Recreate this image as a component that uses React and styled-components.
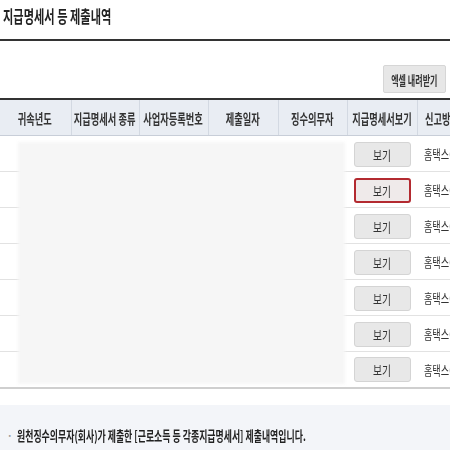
import React from "react"
import styled, {createGlobalStyle} from "styled-components"

const GlobalStyle = createGlobalStyle`
  body {
    margin: 0;
    background: #fff;
    overflow: hidden;
    font-family: "Noto Sans CJK KR", "Noto Sans", sans-serif;
    color: #333;
  }
`

const columns = [
    {label: "귀속년도", width: 71},
    {label: "지급명세서 종류", width: 68},
    {label: "사업자등록번호", width: 69},
    {label: "제출일자", width: 70},
    {label: "징수의무자", width: 69},
    {label: "지급명세서보기", width: 70},
    {label: "신고방법", width: 90, left: true},
]

const rows = [0, 1, 2, 3, 4, 5, 6]

const App = () => {
    return (
        <Page>
            <GlobalStyle/>
            <Title>
                <Narrow $scale={0.66} $origin="left">지급명세서 등 제출내역</Narrow>
            </Title>
            <Toolbar>
                <ExcelButton>
                    <Fit>
                        <Narrow $scale={0.62}>엑셀 내려받기</Narrow>
                    </Fit>
                </ExcelButton>
            </Toolbar>
            <TableWrap>
                <Table>
                    <colgroup>
                        {columns.map((c) => (
                            <col key={c.label} style={{width: c.width}}/>
                        ))}
                    </colgroup>
                    <thead>
                    <tr>
                        {columns.map((c) => (
                            <HeadCell key={c.label} $left={c.left}>
                                <Fit $left={c.left}>
                                    <Narrow $scale={0.66} $origin={c.left ? "left" : "center"}>
                                        {c.label}
                                    </Narrow>
                                </Fit>
                            </HeadCell>
                        ))}
                    </tr>
                    </thead>
                    <tbody>
                    {rows.map((r) => (
                        <Row key={r}>
                            <Cell/>
                            <Cell/>
                            <Cell/>
                            <Cell/>
                            <Cell/>
                            <Cell>
                                <ViewButton $active={r === 1}>
                                    <Narrow $scale={0.75}>보기</Narrow>
                                </ViewButton>
                            </Cell>
                            <Cell $left>
                                <Fit $left>
                                    <Narrow $scale={0.7} $origin="left">홈택스(전자신고)</Narrow>
                                </Fit>
                            </Cell>
                        </Row>
                    ))}
                    </tbody>
                </Table>
                <Blur/>
            </TableWrap>
            <Notice>
                <Dot>·</Dot>
                <Narrow $scale={0.66} $origin="left">
                    원천징수의무자(회사)가 제출한 [근로소득 등 각종지급명세서] 제출내역입니다.
                </Narrow>
            </Notice>
        </Page>
    )
}

const Page = styled.div`
  width: 450px;
  height: 450px;
  overflow: hidden;
`

const Narrow = styled.span`
  display: inline-block;
  flex-shrink: 0;
  white-space: nowrap;
  transform: scaleX(${({$scale}) => $scale});
  transform-origin: ${({$origin}) => $origin || "center"};
`

const Fit = styled.div`
  display: flex;
  justify-content: ${({$left}) => ($left ? "flex-start" : "center")};
  align-items: center;
  width: 100%;
`

const Title = styled.h2`
  margin: 0;
  height: 41px;
  padding: 4px 0 0 3px;
  box-sizing: border-box;
  border-bottom: 2px solid #333;
  font-size: 17px;
  font-weight: 700;
  line-height: 24px;
  color: #222;
  white-space: nowrap;
  overflow: hidden;
`

const Toolbar = styled.div`
  display: flex;
  justify-content: flex-end;
  padding: 24px 4px 0 0;
  height: 57px;
  box-sizing: border-box;
`

const ExcelButton = styled.button`
  width: 63px;
  height: 28px;
  padding: 0;
  background: #e7e7e7;
  border: 1px solid #d6d6d6;
  border-radius: 2px;
  font-family: inherit;
  font-size: 13px;
  font-weight: 700;
  color: #333;
  overflow: hidden;
`

const TableWrap = styled.div`
  position: relative;
  width: 450px;
  overflow: hidden;
`

const Table = styled.table`
  width: 497px;
  table-layout: fixed;
  border-collapse: collapse;
  border-top: 2px solid #333;
  border-bottom: 2px solid #cfcfcf;
`

const HeadCell = styled.th`
  height: 35px;
  padding: ${({$left}) => ($left ? "0 0 0 7px" : "0")};
  background: #e9edf3;
  border-left: 1px solid #d3d9e2;
  border-bottom: 1px solid #c8ced8;
  font-size: 14px;
  font-weight: 700;
  color: #333;
  white-space: nowrap;
  overflow: hidden;

  &:first-child {
    border-left: none;
  }
`

const Row = styled.tr`
  height: 36px;
  border-bottom: 1px solid #e2e2e2;

  &:last-child {
    border-bottom: none;
  }
`

const Cell = styled.td`
  padding: ${({$left}) => ($left ? "0 0 0 7px" : "0")};
  text-align: ${({$left}) => ($left ? "left" : "center")};
  font-size: 13px;
  color: #333;
  white-space: nowrap;
  overflow: hidden;
`

const ViewButton = styled.button`
  width: 57px;
  height: 25px;
  padding: 0;
  margin-top: 1px;
  background: ${({$active}) => ($active ? "#efeaea" : "#e8e8e8")};
  border: ${({$active}) => ($active ? "2px solid #b32a30" : "1px solid #d4d4d4")};
  border-radius: 3px;
  font-family: inherit;
  font-size: 13px;
  color: #333;
`

const Blur = styled.div`
  position: absolute;
  top: 44px;
  left: 18px;
  width: 327px;
  height: 242px;
  background: #f6f6f6;
  filter: blur(1.5px);
`

const Notice = styled.div`
  margin-top: 16px;
  height: 60px;
  padding: 20px 0 0 6px;
  box-sizing: border-box;
  background: #f3f5f9;
  font-size: 13.5px;
  font-weight: 700;
  color: #222;
  white-space: nowrap;
  display: flex;
  align-items: flex-start;
`

const Dot = styled.span`
  color: #999;
  font-weight: 400;
  margin-right: 3px;
`

export default App
